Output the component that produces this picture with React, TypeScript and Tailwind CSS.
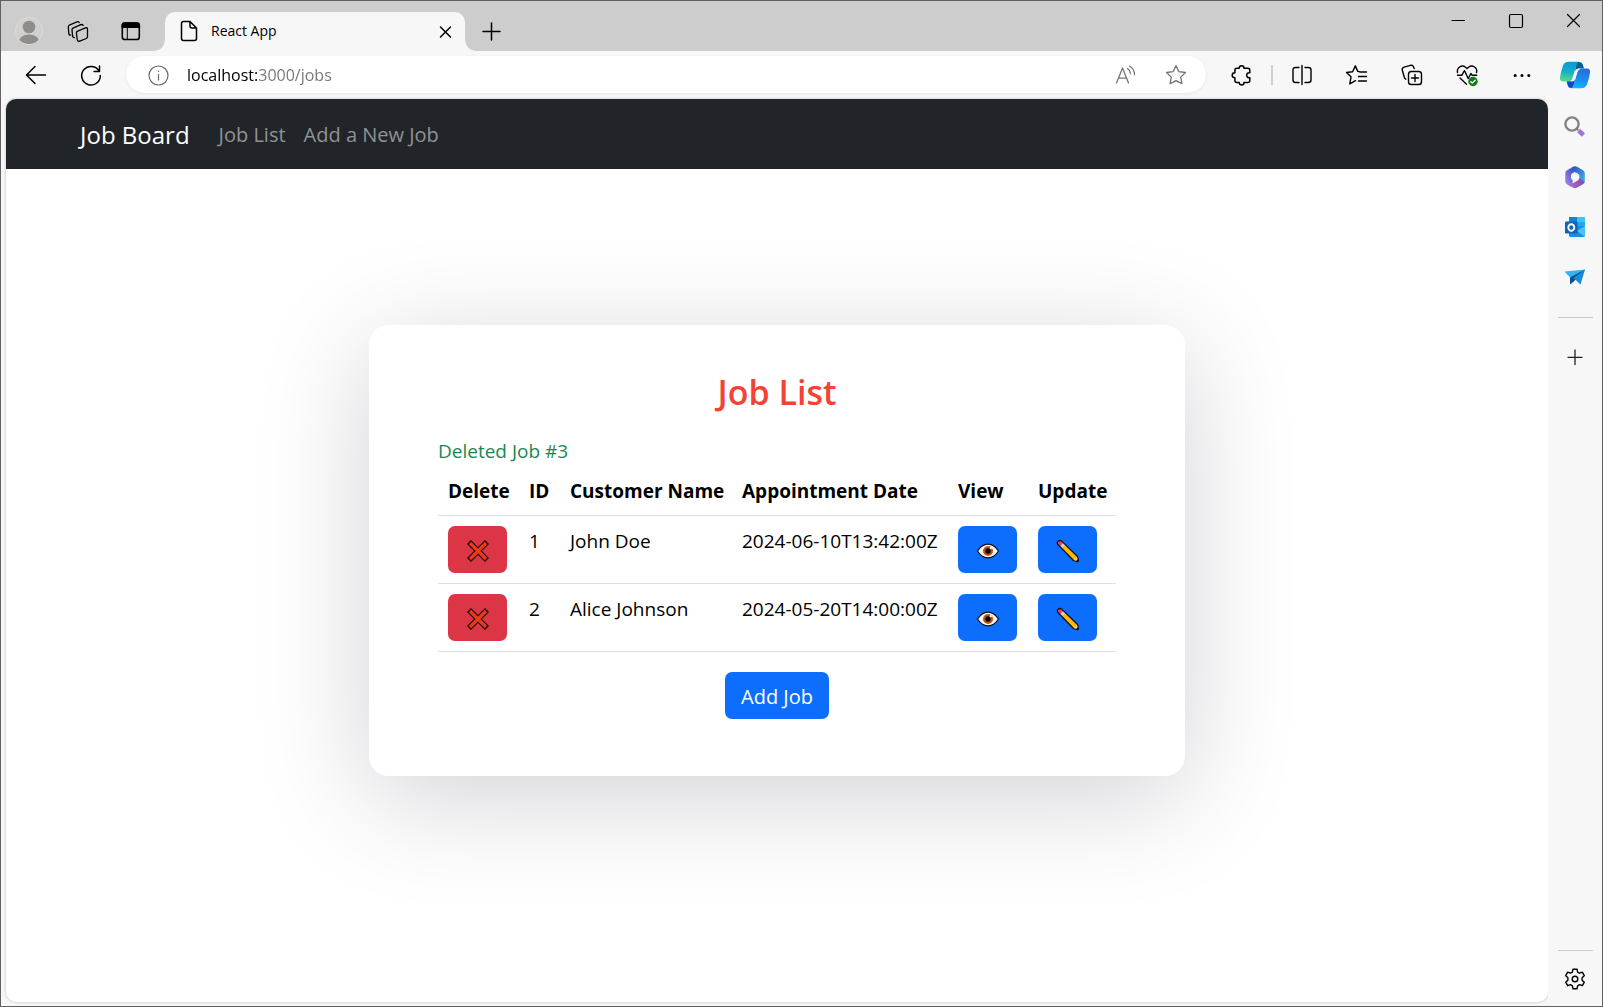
import type { ReactNode } from 'react';

type Job = { id: number; customer: string; date: string };

const jobs: Job[] = [
  { id: 1, customer: 'John Doe', date: '2024-06-10T13:42:00Z' },
  { id: 2, customer: 'Alice Johnson', date: '2024-05-20T14:00:00Z' },
];

function Icon({ children, size = 24, width = 1.3 }: { children: ReactNode; size?: number; width?: number }) {
  return (
    <svg
      width={size}
      height={size}
      viewBox={`0 0 ${size} ${size}`}
      fill="none"
      stroke="currentColor"
      strokeWidth={width}
      strokeLinecap="round"
      strokeLinejoin="round"
      aria-hidden="true"
      className="shrink-0"
    >
      {children}
    </svg>
  );
}

function ToolButton({ label, children }: { label: string; children: ReactNode }) {
  return (
    <button type="button" aria-label={label} className="flex h-9 w-[55px] shrink-0 items-center justify-center text-black">
      {children}
    </button>
  );
}

const STAR = 'M12 2.6l2.9 6 6.6.9-4.8 4.6 1.2 6.6L12 17.6l-5.9 3.1 1.2-6.6L2.5 9.5l6.6-.9z';

function TabStrip() {
  return (
    <div className="flex h-[50px] items-stretch bg-[#cdcdcd]">
      <div className="flex w-[154px] shrink-0 items-center pt-[10px] pl-[13px]">
        <button type="button" aria-label="Profile" className="shrink-0">
          <svg width="30" height="30" viewBox="0 0 30 30" aria-hidden="true">
            <defs>
              <clipPath id="avatar">
                <circle cx="15" cy="15" r="13" />
              </clipPath>
            </defs>
            <circle cx="15" cy="15" r="13.5" fill="#d2d0ce" stroke="#dddbd9" />
            <g fill="#8f8c89" clipPath="url(#avatar)">
              <circle cx="15" cy="11" r="6.3" />
              <ellipse cx="15" cy="26.5" rx="10.5" ry="8" />
            </g>
          </svg>
        </button>
        <button type="button" aria-label="Workspaces" className="ml-[23px]">
          <Icon>
            <path d="M10.2 12.4l8.2-3.5q2.1-.8 2.1 1.3v7.4q0 1.3-1.2 1.9l-6.6 2.6q-2 .6-2.4-1.2l-.9-6.8q-.1-1.1.8-1.7z" />
            <path d="M7.4 18.6q-1.6.1-1.8-1.5l-.6-6.2q-.1-1.2 1-1.8L13.800 5.700q1.500-.600 2.300.7" />
            <path d="M3.600 16.200q-1.600 0-1.800-1.600L1.300 8q-.1-1.200 1-1.800l7.600-3.300q1.500-.6 2.300.6" />
          </Icon>
        </button>
        <button type="button" aria-label="Tab actions" className="ml-[28px]">
          <Icon width={1.6}>
            <rect x="3.300" y="4" width="17" height="16.500" rx="2.600" />
            <path d="M3.300 8.300V6.600Q3.300 4 5.900 4h11.800q2.600 0 2.600 2.600v1.700z" fill="currentColor" />
            <path d="M8.300 8.500v12" strokeWidth={1} />
          </Icon>
        </button>
      </div>
      <div className="flex items-end">
        <div className="h-[10px] w-[10px] bg-[radial-gradient(circle_at_0_0,#cdcdcd_9px,#f7f7f7_10px)]" />
        <div className="flex h-[39px] w-[300px] items-center rounded-t-[10px] bg-[#f7f7f7] pr-[8px] pb-[2px] pl-[12px]">
          <Icon width={1.5}>
            <path d="M13 2.500H6.500Q4.500 2.500 4.500 4.500v15q0 2 2 2h11q2 0 2-2V9zM13 2.500V7q0 2 2 2h4.500" />
          </Icon>
          <span className="ml-[10px] flex-1 font-['Open_Sans'] text-[14px] text-black">React App</span>
          <button type="button" aria-label="Close tab">
            <Icon width={1.5}>
              <path d="M7.500 8l10 10M17.500 8l-10 10" />
            </Icon>
          </button>
        </div>
        <div className="h-[10px] w-[10px] bg-[radial-gradient(circle_at_100%_0,#cdcdcd_9px,#f7f7f7_10px)]" />
        <button type="button" aria-label="New tab" className="mb-[8px] ml-[4px]">
          <Icon width={1.5}>
            <path d="M12.500 4v17M4 12.500h17" />
          </Icon>
        </button>
      </div>
      <div className="ml-auto flex h-[40px] items-center">
        <button type="button" aria-label="Minimize" className="flex h-full w-[58px] items-center justify-center">
          <Icon width={1}>
            <path d="M6 11.500h12.500" />
          </Icon>
        </button>
        <button type="button" aria-label="Maximize" className="flex h-full w-[57px] items-center justify-center">
          <Icon width={1.2}>
            <rect x="5.500" y="5.500" width="13" height="13" rx="1.500" />
          </Icon>
        </button>
        <button type="button" aria-label="Close" className="flex h-full w-[58px] items-center justify-center">
          <Icon width={1.2}>
            <path d="M6.500 5.500l12 12M18.500 5.500l-12 12" />
          </Icon>
        </button>
      </div>
    </div>
  );
}

function CopilotLogo() {
  return (
    <svg width="32" height="32" viewBox="0 0 32 32" aria-hidden="true">
      <defs>
        <linearGradient id="cpA" x1="0.3" y1="0" x2="0.2" y2="1">
          <stop offset="0" stopColor="#0a9ad8" />
          <stop offset="0.5" stopColor="#16b0c8" />
          <stop offset="1" stopColor="#5be07c" />
        </linearGradient>
        <linearGradient id="cpB" x1="0.6" y1="0" x2="0.4" y2="1">
          <stop offset="0" stopColor="#2b6be0" />
          <stop offset="0.600" stopColor="#1592f0" />
          <stop offset="1" stopColor="#18b4ff" />
        </linearGradient>
      </defs>
      <path d="M17 3h3.500q2.500 0 3.300 2.500L25 9.500h-6l-3 4z" fill="#0b5f8c" />
      <path d="M15 29h-3q-2.500 0-3.300-2.500L7.500 22H14l2-4z" fill="#1445cf" />
      <path d="M9.500 2.800H20q-1.700.5-2.500 3.200l-4 13q-1 3.500-4 3.500H4q-3.500 0-3-4 .7-5.500 3-12 1.500-3.700 5.500-3.700z" fill="url(#cpA)" />
      <path d="M22.500 29.200H12q1.700-.5 2.500-3.200l4-13q1-3.500 4-3.500H28q3.500 0 3 4-.7 5.500-3 12-1.500 3.700-5.500 3.700z" fill="url(#cpB)" />
      <path d="M19 9.800h3q-2.800.2-3.800 3.200l-2.400 7.800q-.7 1.700-2.800 1.700H11q2-.7 2.800-3.300l2-6.600q.8-2.500 3.200-2.800z" fill="#f4fbff" />
    </svg>
  );
}

function Toolbar() {
  return (
    <div className="flex h-[48px] items-center bg-[#f7f7f7] pb-[1px] pl-[7px]">
      <ToolButton label="Back">
        <Icon width={1.5}>
          <path d="M2.500 12h19M11 3.500L2.500 12l8.500 8.500" />
        </Icon>
      </ToolButton>
      <ToolButton label="Refresh">
        <Icon width={1.5}>
          <path d="M20.500 3v5.500H15M20.200 8.300A9.300 9.300 0 1 0 21.300 12.500" />
        </Icon>
      </ToolButton>
      <div className="ml-[8px] flex h-[37px] min-w-0 flex-1 items-center rounded-full bg-white pr-[18px] pl-[20px] shadow-[0_1px_3px_rgba(0,0,0,0.08)]">
        <span className="text-[#6b6b6b]">
          <Icon width={1.2}>
            <circle cx="12.500" cy="12.500" r="9.500" />
            <path d="M12.500 11.500v5.500M12.500 8.200v.4" />
          </Icon>
        </span>
        <input
          type="text"
          aria-label="Address"
          defaultValue="localhost:3000/jobs"
          className="ml-[17px] block h-[30px] min-w-0 flex-1 bg-[linear-gradient(90deg,#000_70px,#757575_70px)] bg-clip-text font-['Open_Sans'] text-[16px] text-transparent caret-black outline-none"
        />
        <button type="button" aria-label="Read aloud" className="text-[#757575]">
          <Icon>
            <path d="M2.500 20L8.500 5l6 15M4.500 15.200h8M13.500 5.500q2.800 1.700 3 5M15.500 3q4.800 2.700 5 8.500" />
          </Icon>
        </button>
        <button type="button" aria-label="Add to favorites" className="ml-[26px] text-[#757575]">
          <Icon>
            <path d={STAR} />
          </Icon>
        </button>
      </div>
      <div className="ml-[7px] flex items-center">
        <ToolButton label="Extensions">
          <Icon width={1.5}>
            <path d="M10.200 5.200C10.200 1.800 15 1.800 15 5.200h3.800q2 0 2 2v2.600c-4.200-.8-4.200 5.600 0 4.900v2.800q0 2-2 2H15c0 3.300-4.800 3.300-4.800 0H7.900q-2 0-2-2v-2.700c-3.600 0-3.600-5 0-5V7.200q0-2 2-2z" />
          </Icon>
        </ToolButton>
        <span className="mr-px ml-[3px] h-5 w-[2px] bg-[#cfcfcf]" />
        <ToolButton label="Split screen">
          <Icon width={1.4}>
            <path d="M12 2.500v19M9 4.500H5.500q-2.500 0-2.500 2.500v10q0 2.500 2.500 2.500H9M15 4.500h3.500Q21 4.500 21 7v10q0 2.500-2.500 2.500H15" />
          </Icon>
        </ToolButton>
        <ToolButton label="Favorites">
          <Icon width={1.4}>
            <path d="M14.500 8.700l-1.700-.3-2.500-5.500L7.600 8.700l-6.100.8 4.500 4.300-1.200 7 5.700-3.100M15 9h6.500M13.500 13.500h8M13.500 18h8" />
          </Icon>
        </ToolButton>
        <ToolButton label="Collections">
          <Icon width={1.4}>
            <rect x="8.500" y="8.500" width="13" height="13" rx="2.800" />
            <path d="M15 11.500v7M11.500 15h7M5.800 16.200q-1-.6-1.400-1.700L2.300 7.300q-.6-2.400 1.700-3.200l6.500-1.800q2.300-.5 3.100 1.700l.6 1.600" />
          </Icon>
        </ToolButton>
        <ToolButton label="Browser essentials">
          <Icon width={1.4}>
            <path d="M2.500 9.500C1.500 5 6.500 1 10.500 4.200L12 5.600l1.500-1.400C17.500 1 22.800 5 21.500 9.500M2.500 12.300h4.300l2.700-4.800 3.700 8 2.700-5 1.300 1.800h4.500M5 15l6.500 6.200" />
            <circle cx="18" cy="18.500" r="4.700" fill="#107c10" stroke="none" />
            <path d="M15.800 18.700l1.500 1.400 2.900-2.900" stroke="#fff" />
          </Icon>
        </ToolButton>
        <ToolButton label="Settings and more">
          <Icon>
            <g fill="currentColor" stroke="none">
              <circle cx="5.200" cy="12.500" r="1.500" />
              <circle cx="12" cy="12.500" r="1.500" />
              <circle cx="18.800" cy="12.500" r="1.500" />
            </g>
          </Icon>
        </ToolButton>
        <button type="button" aria-label="Copilot" className="flex w-[53px] shrink-0 items-center justify-center pr-[2px]">
          <CopilotLogo />
        </button>
      </div>
    </div>
  );
}

function SideButton({ label, children }: { label: string; children: ReactNode }) {
  return (
    <button type="button" aria-label={label} className="flex h-[50px] w-full items-center justify-center">
      {children}
    </button>
  );
}

function Sidebar() {
  return (
    <aside className="flex w-[54px] shrink-0 flex-col items-center bg-[#f7f7f7] pt-[3px] text-[#222]">
      <SideButton label="Search">
        <svg width="24" height="24" viewBox="0 0 24 24" fill="none" aria-hidden="true">
          <path d="M15.500 15.500l5 4.500" stroke="#a573d8" strokeWidth="4.500" />
          <circle cx="9" cy="9" r="6.600" stroke="#858585" strokeWidth="2.400" />
          <path d="M13.500 13.500l1.600 1.600" stroke="#777" strokeWidth="2" />
        </svg>
      </SideButton>
      <SideButton label="Microsoft 365">
        <svg width="24" height="24" viewBox="0 0 24 24" aria-hidden="true">
          <defs>
            <linearGradient id="mA" x1="0" y1="1" x2="0.6" y2="0">
              <stop offset="0" stopColor="#a98ce8" />
              <stop offset="1" stopColor="#4c56c8" />
            </linearGradient>
            <linearGradient id="mB" x1="0" y1="0" x2="1" y2="1">
              <stop offset="0" stopColor="#2b50b8" />
              <stop offset="1" stopColor="#45b4f2" />
            </linearGradient>
            <linearGradient id="mC" x1="0" y1="0" x2="1" y2="0">
              <stop offset="0" stopColor="#b877d8" />
              <stop offset="1" stopColor="#7c4bb0" />
            </linearGradient>
          </defs>
          <path d="M10.500 1.600L4 5.300Q2.300 6.300 2.300 8.200v8q0 2 1.800 3L8 21.400l2-5.400-2.200-4L8.500 9z" fill="url(#mA)" />
          <path d="M9.500 2.100Q12 .5 14.500 2.100L20 5.300q1.800 1 1.800 3v8q0 1-.6 1.800L16 15.500V9.700L11.500 7 8.200 9z" fill="url(#mB)" />
          <path d="M3 18.300q.5.600 1.200 1l5.600 3.100q2.200 1.200 4.400 0l5.700-3.200q1.300-.8 1.700-2.200L16.200 13l-4 4q-4.500 2.500-9.200 1.300z" fill="url(#mC)" />
          <circle cx="12.300" cy="12" r="4.200" fill="#f7f7f7" />
        </svg>
      </SideButton>
      <SideButton label="Outlook">
        <svg width="24" height="24" viewBox="0 0 24 24" aria-hidden="true">
          <rect x="6" y="2" width="16" height="17" rx="1.500" fill="#2aa5e8" />
          <path d="M6 2h8v5H6z" fill="#1683cf" />
          <path d="M14 2h7q1 0 1 1v4h-8z" fill="#3fc3f5" />
          <path d="M6 11h16v9.500q0 1.500-1.500 1.500h-13Q6 22 6 20.500z" fill="#1a8fe0" />
          <path d="M22 11l-8 5 8 6z" fill="#48c4f4" />
          <rect x="2" y="6.500" width="12.500" height="12" rx="1.300" fill="#0f63b8" />
          <ellipse cx="8.300" cy="12.500" rx="3" ry="3.300" fill="none" stroke="#fff" strokeWidth="1.900" />
        </svg>
      </SideButton>
      <SideButton label="Drop">
        <svg width="24" height="24" viewBox="0 0 24 24" aria-hidden="true">
          <path d="M1.500 6.500L22 4.500 8.500 14z" fill="#32b4ee" />
          <path d="M22 4.500L7 12.500v7l4-3.200z" fill="#0a4f94" />
          <path d="M22 4.500L10.500 13l7 6.500z" fill="#1989d8" />
        </svg>
      </SideButton>
      <div className="mt-[15px] h-px w-[35px] bg-[#c8c8c8]" />
      <button type="button" aria-label="Customize" className="mt-[27px]">
        <Icon>
          <path d="M12 5v14.500M5 12.300h14" />
        </Icon>
      </button>
      <div className="mt-auto h-px w-[35px] bg-[#cfcfcf]" />
      <button type="button" aria-label="Settings" className="mt-[16px] mb-[15px] text-black">
        <Icon width={1.4}>
          <path d="M10 2.200h4l.6 2.900 1.900 1.100 2.800-1 2 3.500-2.200 2v2.500l2.200 2-2 3.500-2.800-1-1.900 1.100-.6 3h-4l-.6-3-1.900-1.100-2.800 1-2-3.500 2.200-2v-2.500l-2.200-2 2-3.500 2.800 1 1.900-1.100z" />
          <circle cx="12" cy="12" r="2.800" />
        </Icon>
      </button>
    </aside>
  );
}

function CrossMark() {
  return (
    <svg width="24" height="24" viewBox="0 0 24 24" aria-hidden="true">
      <g fill="none" strokeLinecap="butt">
        <path d="M3 3l18 18M21 3L3 21" stroke="#1a0a08" strokeWidth="5.600" />
        <path d="M4 4l16 16M20 4L4 20" stroke="#f03a17" strokeWidth="3.200" />
      </g>
    </svg>
  );
}

function Eye() {
  return (
    <svg width="24" height="24" viewBox="0 0 24 24" aria-hidden="true">
      <path d="M1.500 12Q6 5.200 12 5.200T22.500 12Q18 18.800 12 18.800T1.500 12z" fill="#fff" stroke="#111" strokeWidth="1.300" />
      <circle cx="12" cy="12" r="5" fill="#ca5010" />
      <circle cx="12" cy="12" r="2.700" fill="#000" />
      <circle cx="14.800" cy="9.200" r="1.100" fill="#fff" />
    </svg>
  );
}

function Pencil() {
  return (
    <svg width="24" height="24" viewBox="0 0 24 24" aria-hidden="true">
      <path d="M1.700 5.200Q.7 3.500 2.200 2.200t3.300-.3L21.500 17.500q1.200 2.700.8 4.900-2.300.4-4.800-.9z" fill="#ffb900" />
      <path d="M17.500 21.500l4-4q1.200 2.700.8 4.900-2.300.4-4.800-.9z" fill="#f3c9a5" />
      <path d="M20 22.300l2.300-2.500v2.600z" fill="#111" />
      <path d="M3.800 7.200l3.700-3.400 2 2-3.700 3.500z" fill="#d2d2d2" />
      <path d="M1.700 5.200Q.7 3.500 2.200 2.200t3.300-.3l2 1.900-3.700 3.400z" fill="#e74856" />
      <path
        d="M1.700 5.200Q.7 3.500 2.200 2.200t3.300-.3L21.500 17.500q1.200 2.700.8 4.900-2.300.4-4.800-.9z"
        fill="none"
        stroke="#111"
        strokeWidth="1.300"
        strokeLinejoin="round"
      />
    </svg>
  );
}

function RowButton({ label, danger = false, children }: { label: string; danger?: boolean; children: ReactNode }) {
  return (
    <button
      type="button"
      aria-label={label}
      className={
        'flex h-[47px] w-[59px] items-center justify-center rounded-[7px] pt-[2px] ' +
        (danger ? 'bg-[#dc3545]' : 'bg-[#0d6efd]')
      }
    >
      {children}
    </button>
  );
}

function JobTable() {
  return (
    <table className="w-full table-fixed border-collapse text-left leading-[30px] whitespace-nowrap text-black">
      <colgroup>
        <col className="w-[81px]" />
        <col className="w-[41px]" />
        <col className="w-[172px]" />
        <col className="w-[216px]" />
        <col className="w-[80px]" />
        <col />
      </colgroup>
      <thead>
        <tr className="border-b border-[#dee2e6]">
          {['Delete', 'ID', 'Customer Name', 'Appointment Date', 'View', 'Update'].map((h) => (
            <th key={h} scope="col" className="pt-[10px] pb-[9px] pl-[10px] font-bold">
              {h}
            </th>
          ))}
        </tr>
      </thead>
      <tbody>
        {jobs.map((job) => (
          <tr key={job.id} className="border-b border-[#dee2e6] align-top">
            <td className="py-[10px] pl-[10px]">
              <RowButton label={`Delete job ${job.id}`} danger>
                <CrossMark />
              </RowButton>
            </td>
            <td className="py-[10px] pl-[10px]">{job.id}</td>
            <td className="py-[10px] pl-[10px]">{job.customer}</td>
            <td className="py-[10px] pl-[10px]">{job.date}</td>
            <td className="py-[10px] pl-[10px]">
              <RowButton label={`View job ${job.id}`}>
                <Eye />
              </RowButton>
            </td>
            <td className="py-[10px] pl-[10px]">
              <RowButton label={`Update job ${job.id}`}>
                <Pencil />
              </RowButton>
            </td>
          </tr>
        ))}
      </tbody>
    </table>
  );
}

function Page() {
  return (
    <div className="flex min-w-0 flex-1 flex-col overflow-hidden rounded-[10px] bg-white font-['Open_Sans'] text-[19px] shadow-[0_0_3px_rgba(0,0,0,0.25)]">
      <nav className="flex h-[70px] shrink-0 items-center bg-[#212529] pt-[2px] pl-[74px] text-[20px]">
        <a href="#home" className="text-[24px] text-white">
          Job Board
        </a>
        <a href="#jobs" className="ml-[29px] text-[#909294]">
          Job List
        </a>
        <a href="#add" className="ml-[18px] text-[#909294]">
          Add a New Job
        </a>
      </nav>
      <main className="flex flex-1 items-center justify-center px-5 pb-[70px]">
        <section className="flex w-full max-w-[816px] flex-col items-center rounded-[20px] bg-white px-[69px] pt-[46px] pb-[57px] shadow-[0_22px_112px_rgba(8,8,32,0.18)]">
          <h1 className="text-[34px] leading-[42px] font-semibold text-[#f44336]">Job List</h1>
          <p className="mt-[23px] w-full leading-[30px] text-[#198754]">Deleted Job #3</p>
          <JobTable />
          <button
            type="button"
            className="mt-[20px] flex h-[47px] w-[104px] items-center justify-center rounded-[7px] bg-[#0d6efd] pt-[2px] text-[20px] text-white"
          >
            Add Job
          </button>
        </section>
      </main>
    </div>
  );
}

export default function App() {
  return (
    <div className="flex min-h-screen flex-col border border-[#626062] bg-[#f7f7f7]">
      <TabStrip />
      <Toolbar />
      <div className="flex flex-1">
        <div className="flex min-w-0 flex-1 pb-[4px] pl-[5px]">
          <Page />
        </div>
        <Sidebar />
      </div>
    </div>
  );
}
